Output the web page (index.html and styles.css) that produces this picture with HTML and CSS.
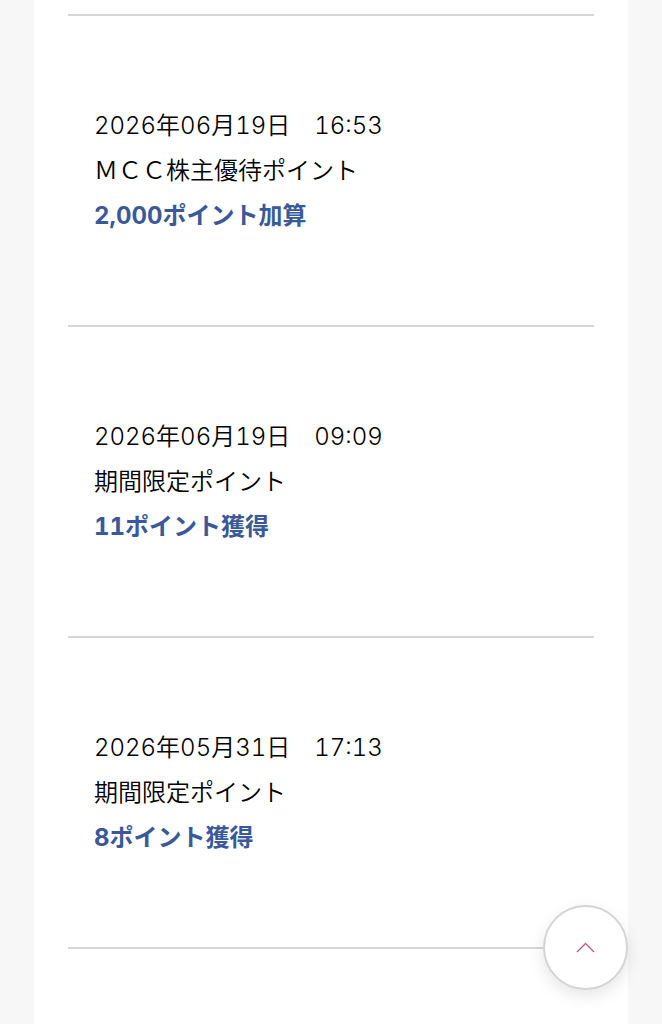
FILE: index.html
```
<!DOCTYPE html>
<html lang="ja">
<head>
    <meta charset="UTF-8">
    <meta name="viewport" content="width=device-width, initial-scale=1">
    <title>ポイント履歴</title>
    <link rel="stylesheet" href="styles.css">
</head>
<body>

    <main class="container">
        <!-- ポイント履歴 -->
        <ul class="history-list">
            <li class="history-item">
                <p class="history-date">2026年06月19日　16:53</p>
                <p class="history-name">ＭＣＣ株主優待ポイント</p>
                <p class="history-point">2,000ポイント加算</p>
            </li>
            <li class="history-item">
                <p class="history-date">2026年06月19日　09:09</p>
                <p class="history-name">期間限定ポイント</p>
                <p class="history-point">11ポイント獲得</p>
            </li>
            <li class="history-item">
                <p class="history-date">2026年05月31日　17:13</p>
                <p class="history-name">期間限定ポイント</p>
                <p class="history-point">8ポイント獲得</p>
            </li>
        </ul>
    </main>

    <!-- ページトップへ戻る -->
    <button type="button" class="page-top" aria-label="ページトップへ戻る" onclick="window.scrollTo(0, 0)">
        <svg width="20" height="12" viewBox="0 0 20 12" fill="none" stroke="#bd5c8c" stroke-width="1.4">
            <path d="M1 10 L9.5 1.5 L18 10"/>
        </svg>
    </button>

</body>
</html>
```

FILE: styles.css
```
* { box-sizing: border-box; }
body { margin: 0; background: #f7f7f7; color: #000; font-family: Inter, "Noto Sans CJK JP", sans-serif; font-size: 24px; line-height: 45px; font-variant-numeric: tabular-nums; }
p { margin: 0; }
.container { min-height: 100vh; margin: 0 34px; padding: 14px 34px 0; background: #fff; }
.history-list { margin: 0; padding: 0; list-style: none; border-top: 2px solid #d6d6d6; }
.history-item { padding: 87px 26px; border-bottom: 2px solid #d6d6d6; }
.history-date, .history-name { font-weight: 350; }
.history-point { color: #3b5998; font-weight: 700; }
.page-top { position: fixed; right: 34px; bottom: 34px; display: flex; align-items: center; justify-content: center; width: 85px; height: 85px; padding: 0; border: 2px solid #d4d4d4; border-radius: 50%; background: #fff; box-shadow: 0 6px 16px rgba(0,0,0,0.1); cursor: pointer; }
```
